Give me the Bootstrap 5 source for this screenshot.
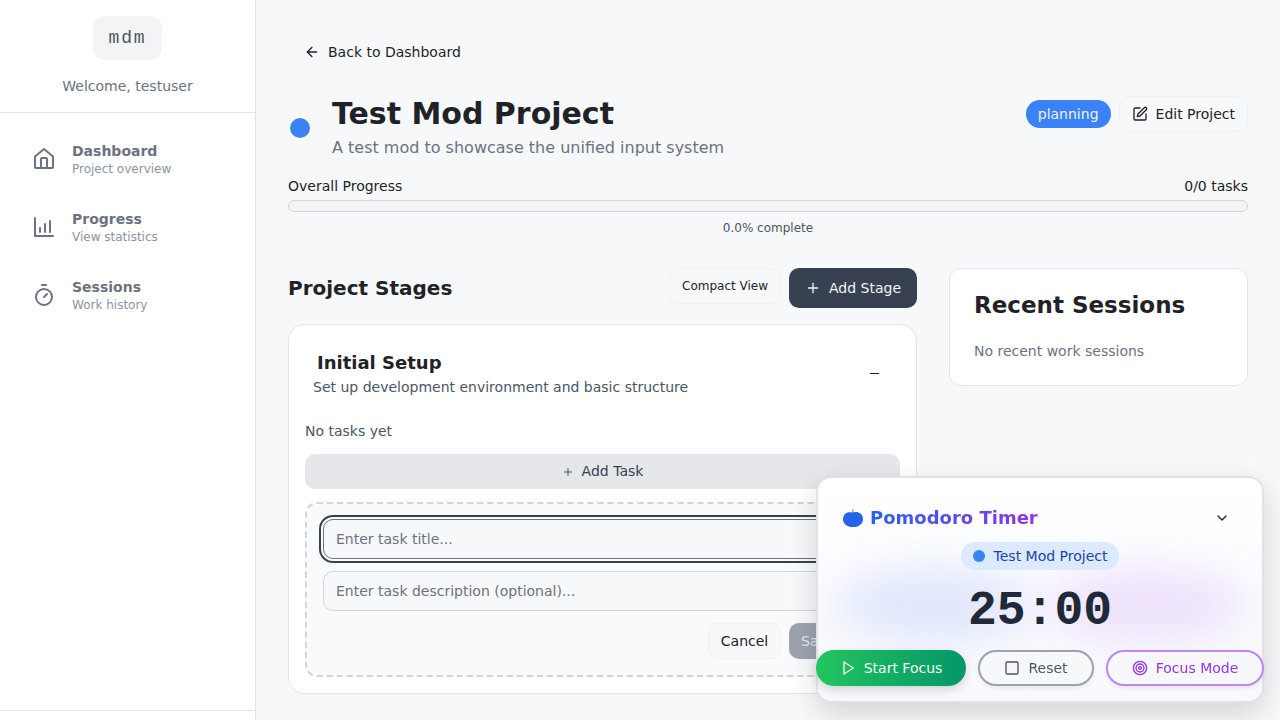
<!DOCTYPE html>
<html lang="en">
<head>
  <meta charset="UTF-8">
  <meta name="viewport" content="width=device-width, initial-scale=1">
  <title>Test Mod Project - mdm</title>
  <link href="https://cdn.jsdelivr.net/npm/bootstrap@5.3.0/dist/css/bootstrap.min.css" rel="stylesheet">
  <style>
    html, body { height: 720px; overflow: hidden; }
    body { font-family: "DejaVu Sans", sans-serif; background: #f7f8fa; color: #1f2328; font-size: 14px; }
    .side-bar { width: 256px; height: 720px; background: #fff; border-right: 1px solid #e1e4ea; flex: none; }
    .side-head { height: 113px; padding-top: 16px; border-bottom: 1px solid #e1e4ea; }
    .logo-box { width: 69px; height: 44px; background: #f3f4f6; border-radius: 12px; font-family: "Liberation Mono", monospace; font-size: 18px; color: #4b5563; letter-spacing: 1.8px; }
    .welcome { color: #6b7280; font-size: 14px; margin-top: 16px; line-height: 20px; }
    .side-nav { padding: 16px; }
    .side-link { height: 60px; margin-bottom: 8px; padding-left: 16px; gap: 16px; color: #6b7280; text-decoration: none; }
    .side-link svg { width: 24px; height: 24px; flex: none; }
    .side-title { font-size: 14px; font-weight: 700; line-height: 18px; color: #6b7280; }
    .side-sub { font-size: 12px; line-height: 16px; margin-top: 1px; color: #8b93a1; }
    .side-foot { height: 10px; border-top: 1px solid #e1e4ea; }
    .main-area { padding: 0 32px; min-width: 0; flex: 1; }
    .back-link { margin: 34px 0 0 0; height: 36px; padding-left: 16px; gap: 8px; color: #1f2328; font-size: 14px; }
    .head-row { margin-top: 25px; height: 64px; }
    .status-dot { width: 24px; height: 24px; border-radius: 50%; background: #3b82f6; border: 2px solid #fff; margin-top: 2px; flex: none; }
    .head-text { padding-top: 2px; }
    .page-title { font-size: 30px; font-weight: 700; line-height: 36px; margin: 0; color: #1f2328; }
    .page-desc { font-size: 16px; line-height: 24px; color: #6b7280; margin: 4px 0 0 0; }
    .pill-status { background: #3b82f6; color: #eef2ff; border-radius: 14px; height: 28px; padding: 0 12px; font-size: 14px; margin-top: 5px; }
    .soft-btn { background: #f7f8fa; border: 1px solid #f0f1f4; border-radius: 10px; color: #1f2328; }
    .edit-btn { height: 36px; padding: 0 12px; gap: 8px; font-size: 14px; margin-top: 1px; }
    .prog-row { margin-top: 17px; font-size: 14px; line-height: 20px; }
    .prog-track { height: 12px; margin-top: 4px; background: #f3f4f6; border: 1px solid #d1d5db; border-radius: 6px; }
    .prog-note { font-size: 12px; line-height: 16px; color: #4b5563; margin-top: 8px; text-align: center; }
    .cols-row { margin-top: 32px; gap: 32px; }
    .stage-col { width: 629px; flex: none; }
    .stage-head { height: 40px; }
    .stage-heading { font-size: 20px; font-weight: 700; line-height: 28px; margin: 0; }
    .compact-btn { height: 36px; padding: 0 12px; font-size: 12px; margin-top: -4px; }
    .add-stage { height: 40px; width: 128px; background: #374151; color: #f3f4f6; border-radius: 10px; gap: 8px; font-size: 14px; }
    .stage-box { margin-top: 16px; height: 370px; background: #fff; border: 1px solid #e1e4ea; border-radius: 16px; padding: 16px; }
    .stage-name { font-size: 18px; font-weight: 700; line-height: 28px; margin: 8px 0 0 12px; }
    .stage-desc { font-size: 14px; line-height: 20px; color: #4b5563; margin: 0 0 0 8px; }
    .collapse-mark { width: 9px; height: 1px; background: #1f2328; margin: 32px 21px 0 0; }
    .no-tasks { color: #4b5563; font-size: 14px; line-height: 20px; margin-top: 24px; }
    .add-task { height: 35px; margin-top: 13px; background: #e5e7eb; border-radius: 10px; gap: 8px; color: #374151; font-size: 14px; }
    .task-form { margin-top: 13px; height: 175px; border: 2px dashed #d1d5db; border-radius: 12px; background: #f9fafb; padding: 15px 15px 0 16px; }
    .task-input { height: 40px; background: #f7f8fa; border: 1px solid #d1d5db; border-radius: 10px; padding: 0 12px; font-size: 14px; color: #6b7280; line-height: 38px; }
    .task-input.focused { border-color: #6b7280; box-shadow: 0 0 0 2px #f9fafb, 0 0 0 4px #374151; }
    .task-input + .task-input { margin-top: 12px; }
    .form-btns { margin-top: 12px; gap: 8px; }
    .cancel-btn { height: 36px; width: 73px; font-size: 14px; }
    .save-btn { height: 36px; width: 94px; background: #9ca3af; color: #e5e7eb; border-radius: 10px; font-size: 14px; padding-left: 12px; }
    .side-col { flex: 1; min-width: 0; }
    .recent-box { height: 118px; background: #fff; border: 1px solid #e1e4ea; border-radius: 12px; padding: 20px 24px; }
    .recent-title { font-size: 23px; font-weight: 700; line-height: 32px; margin: 0; }
    .recent-empty { color: #6b7280; font-size: 14px; line-height: 20px; margin: 20px 0 0 0; }
    .timer-pane { position: fixed; left: 816px; top: 476px; width: 448px; height: 227px; background: #fff; border: 2px solid #dfe2e8; border-radius: 16px; box-shadow: 0 10px 28px rgba(0,0,0,.15); }
    .timer-glow { position: absolute; inset: 0; border-radius: 14px; overflow: hidden; background: linear-gradient(180deg, #fff, #f8f9fc); }
    .timer-glow::before, .timer-glow::after { content: ""; position: absolute; top: 88px; width: 200px; height: 76px; border-radius: 50%; filter: blur(20px); }
    .timer-glow::before { left: 16px; background: rgba(96,130,246,.16); }
    .timer-glow::after { right: 16px; background: rgba(168,85,247,.15); }
    .timer-inner { position: relative; height: 100%; }
    .timer-top { padding: 18px 32px 0 25px; height: 62px; }
    .timer-name { font-size: 18px; font-weight: 700; line-height: 24px; background: linear-gradient(90deg, #2563eb, #9333ea); -webkit-background-clip: text; background-clip: text; color: transparent; margin-left: 7px; }
    .proj-pill { width: 158px; height: 28px; background: #dbeafe; color: #1e40af; border-radius: 14px; gap: 9px; font-size: 14px; margin: 2px auto 0; }
    .proj-dot { width: 12px; height: 12px; border-radius: 50%; background: #3b82f6; }
    .timer-digits { font-family: "Liberation Mono", monospace; font-size: 48px; font-weight: 700; line-height: 48px; color: #1f2937; text-align: center; margin-top: 17px; }
    .timer-btns { position: absolute; left: -2px; top: 172px; width: 449px; }
    .t-btn { height: 36px; border-radius: 18px; gap: 8px; font-size: 14px; background: #f7f8fa; }
    .t-start { width: 150px; background: linear-gradient(90deg, #22c55e, #059669); color: #f0fdf4; box-shadow: 0 4px 10px rgba(0,0,0,.15); }
    .t-reset { width: 116px; margin-left: 12px; border: 2px solid #9ca3af; color: #4b5563; box-shadow: 0 2px 4px rgba(0,0,0,.08); }
    .t-focus { width: 158px; margin-left: 12px; border: 2px solid #c084fc; color: #9333ea; box-shadow: 0 2px 4px rgba(0,0,0,.08); }
  </style>
</head>
<body>

<div class="d-flex">
  <div class="side-bar d-flex flex-column">
    <div class="side-head text-center">
      <div class="logo-box d-flex align-items-center justify-content-center mx-auto">mdm</div>
      <div class="welcome">Welcome, testuser</div>
    </div>
    <div class="side-nav flex-grow-1">
      <a class="side-link d-flex align-items-center" href="#">
        <svg viewBox="0 0 24 24" fill="none" stroke="#6b7280" stroke-width="2" stroke-linejoin="round" stroke-linecap="round"><path d="M12 2 21 9.500V20a1 1 0 0 1-1 1H4a1 1 0 0 1-1-1V9.500z"/><path d="M9 21v-9a1 1 0 0 1 1-1h4a1 1 0 0 1 1 1v9"/></svg>
        <div><div class="side-title">Dashboard</div><div class="side-sub">Project overview</div></div>
      </a>
      <a class="side-link d-flex align-items-center" href="#">
        <svg viewBox="0 0 24 24" fill="none" stroke="#6b7280" stroke-width="2" stroke-linecap="round" stroke-linejoin="round"><path d="M3 3v18h18"/><path d="M8 17v-4"/><path d="M13 17V9"/><path d="M18 17V6"/></svg>
        <div><div class="side-title">Progress</div><div class="side-sub">View statistics</div></div>
      </a>
      <a class="side-link d-flex align-items-center" href="#">
        <svg viewBox="0 0 24 24" fill="none" stroke="#6b7280" stroke-width="2" stroke-linecap="round" stroke-linejoin="round"><circle cx="12" cy="14" r="8"/><path d="M10 2h4"/><path d="m12 14 3-3"/></svg>
        <div><div class="side-title">Sessions</div><div class="side-sub">Work history</div></div>
      </a>
    </div>
    <div class="side-foot"></div>
  </div>

  <div class="main-area">
    <div class="back-link d-flex align-items-center">
      <svg width="16" height="16" viewBox="0 0 24 24" fill="none" stroke="#1f2328" stroke-width="2" stroke-linecap="round" stroke-linejoin="round"><path d="M19 12H5"/><path d="m12 19-7-7 7-7"/></svg>
      <span>Back to Dashboard</span>
    </div>

    <div class="head-row d-flex justify-content-between">
      <div class="d-flex align-items-center">
        <div class="status-dot me-1"></div>
        <div class="ms-3 head-text">
          <h1 class="page-title">Test Mod Project</h1>
          <p class="page-desc">A test mod to showcase the unified input system</p>
        </div>
      </div>
      <div class="d-flex gap-2 align-items-start">
        <span class="pill-status d-flex align-items-center">planning</span>
        <div class="soft-btn edit-btn d-flex align-items-center">
          <svg width="16" height="16" viewBox="0 0 24 24" fill="none" stroke="#1f2328" stroke-width="2" stroke-linecap="round" stroke-linejoin="round"><path d="M12 3H5a2 2 0 0 0-2 2v14a2 2 0 0 0 2 2h14a2 2 0 0 0 2-2v-7"/><path d="M18.400 2.600a2.100 2.100 0 0 1 3 3L12 15l-4 1 1-4z"/></svg>
          <span>Edit Project</span>
        </div>
      </div>
    </div>

    <div class="prog-row d-flex justify-content-between"><span>Overall Progress</span><span>0/0 tasks</span></div>
    <div class="prog-track"></div>
    <div class="prog-note">0.0% complete</div>

    <div class="cols-row d-flex">
      <div class="stage-col">
        <div class="stage-head d-flex justify-content-between align-items-center">
          <h2 class="stage-heading">Project Stages</h2>
          <div class="d-flex gap-2 align-items-center">
            <div class="soft-btn compact-btn d-flex align-items-center">Compact View</div>
            <div class="add-stage d-flex align-items-center justify-content-center">
              <svg width="16" height="16" viewBox="0 0 24 24" fill="none" stroke="#f3f4f6" stroke-width="2" stroke-linecap="round"><path d="M5 12h14"/><path d="M12 5v14"/></svg>
              <span>Add Stage</span>
            </div>
          </div>
        </div>

        <div class="stage-box">
          <div class="d-flex justify-content-between">
            <div>
              <div class="stage-name">Initial Setup</div>
              <p class="stage-desc">Set up development environment and basic structure</p>
            </div>
            <div class="collapse-mark"></div>
          </div>
          <div class="no-tasks">No tasks yet</div>
          <div class="add-task d-flex align-items-center justify-content-center">
            <svg width="12" height="12" viewBox="0 0 24 24" fill="none" stroke="#4b5563" stroke-width="2" stroke-linecap="round"><path d="M5 12h14"/><path d="M12 5v14"/></svg>
            <span>Add Task</span>
          </div>
          <div class="task-form">
            <div class="task-input focused">Enter task title...</div>
            <div class="task-input">Enter task description (optional)...</div>
            <div class="form-btns d-flex justify-content-end">
              <div class="soft-btn cancel-btn d-flex align-items-center justify-content-center">Cancel</div>
              <div class="save-btn d-flex align-items-center">Save Task</div>
            </div>
          </div>
        </div>
      </div>

      <div class="side-col">
        <div class="recent-box">
          <h3 class="recent-title">Recent Sessions</h3>
          <p class="recent-empty">No recent work sessions</p>
        </div>
      </div>
    </div>
  </div>
</div>

<div class="timer-pane">
  <div class="timer-glow"></div>
  <div class="timer-inner">
    <div class="timer-top d-flex justify-content-between align-items-center">
      <div class="d-flex align-items-center">
        <svg width="20" height="20" viewBox="0 0 20 20"><path d="M10 4.500c1.500-.6 3.500-.7 5.500 0C18.500 5.500 20 8 20 11.200c0 4.500-4 7.800-10 7.800S0 15.700 0 11.200C0 8 1.500 5.500 4.500 4.500c1.500-.5 3-.4 4.700 0L9.700 1h.8z" fill="#2563eb"/></svg>
        <span class="timer-name">Pomodoro Timer</span>
      </div>
      <svg width="16" height="16" viewBox="0 0 24 24" fill="none" stroke="#1f2328" stroke-width="2" stroke-linecap="round" stroke-linejoin="round"><path d="m6 9 6 6 6-6"/></svg>
    </div>
    <div class="proj-pill d-flex align-items-center justify-content-center"><span class="proj-dot"></span><span>Test Mod Project</span></div>
    <div class="timer-digits">25:00</div>
    <div class="timer-btns d-flex">
      <div class="t-btn t-start d-flex align-items-center justify-content-center">
        <svg width="16" height="16" viewBox="0 0 24 24" fill="none" stroke="#f0fdf4" stroke-width="2" stroke-linejoin="round"><path d="M6 3l14 9-14 9z"/></svg>
        <span>Start Focus</span>
      </div>
      <div class="t-btn t-reset d-flex align-items-center justify-content-center">
        <svg width="16" height="16" viewBox="0 0 24 24" fill="none" stroke="#4b5563" stroke-width="2"><rect x="3" y="3" width="18" height="18" rx="2"/></svg>
        <span>Reset</span>
      </div>
      <div class="t-btn t-focus d-flex align-items-center justify-content-center">
        <svg width="16" height="16" viewBox="0 0 24 24" fill="none" stroke="#9333ea" stroke-width="2"><circle cx="12" cy="12" r="10"/><circle cx="12" cy="12" r="6"/><circle cx="12" cy="12" r="2"/></svg>
        <span>Focus Mode</span>
      </div>
    </div>
  </div>
</div>

<script src="https://cdn.jsdelivr.net/npm/bootstrap@5.3.0/dist/js/bootstrap.bundle.min.js"></script>
</body>
</html>
